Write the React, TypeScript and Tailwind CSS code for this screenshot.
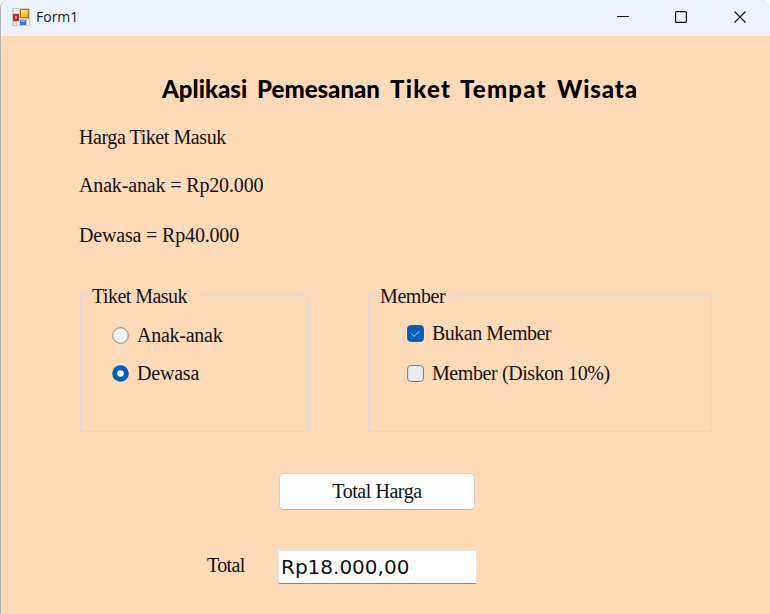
import type { ReactNode } from 'react';

const serif = "font-['Liberation_Serif',serif] text-[20px] leading-[24px] whitespace-nowrap text-[#111]";

function Label({ children, className = '' }: { children: ReactNode; className?: string }) {
  return <div className={`${serif} ${className}`}>{children}</div>;
}

function TitleBar() {
  return (
    <header className="flex h-9 items-center bg-[#eef2fa] pb-[2px] pl-[11px]">
      <svg width="18" height="18" viewBox="0 0 18 18">
        <defs>
          <linearGradient id="gold" x1="0" y1="0" x2="1" y2="1">
            <stop offset="0" stopColor="#ffe98a" />
            <stop offset="1" stopColor="#e5a800" />
          </linearGradient>
        </defs>
        <rect width="18" height="18" fill="#c9ccd0" />
        <rect x="2" y="1" width="5" height="4" fill="#f4f7fb" />
        <rect x="8" y="1" width="9" height="9" fill="#a97c12" />
        <rect x="9" y="2" width="7" height="7" fill="url(#gold)" />
        <rect x="1" y="6" width="6" height="7" fill="#b5302a" />
        <rect x="3" y="8" width="2" height="3" fill="#df8177" />
        <rect x="8" y="12" width="6" height="5" fill="#3f78d8" />
        <rect x="9" y="12" width="4" height="2" fill="#79a9f3" />
        <path d="M2 14h2v3H2zM5 14h2v3H5zM15 12h2v5h-2z" fill="#f4f7fb" />
      </svg>
      <span className="ml-[6px] font-['Open_Sans',sans-serif] text-[14px] leading-5 text-[#1b1b1b]">Form1</span>
      <svg className="ml-auto mr-[22px]" width="131" height="14" viewBox="0 0 131 14" fill="none" stroke="#111" strokeWidth="1.2">
        <path d="M0 6.5h12" strokeWidth="1" />
        <rect x="58.6" y="1.6" width="10.8" height="10.8" rx="1" />
        <path d="M117.5 1.5l11 11M128.5 1.5l-11 11" />
      </svg>
    </header>
  );
}

function Radio({ checked }: { checked?: boolean }) {
  return (
    <svg width="17" height="17" viewBox="0 0 17 17">
      {checked ? (
        <>
          <circle cx="8.5" cy="8.5" r="8.3" fill="#005fb8" />
          <circle cx="8.5" cy="8.5" r="3.3" fill="#fff" />
        </>
      ) : (
        <circle cx="8.5" cy="8.5" r="7.8" fill="#f3f3f3" stroke="#858585" />
      )}
    </svg>
  );
}

function Check({ checked }: { checked?: boolean }) {
  return (
    <svg width="17" height="17" viewBox="0 0 17 17">
      <rect x="0.6" y="0.6" width="15.8" height="15.8" rx="3" fill={checked ? '#005fb8' : '#ebebeb'} stroke={checked ? '#005fb8' : '#777'} />
      {checked && <path d="M4.5 8.8l2.6 2.6 5.4-5.3" fill="none" stroke="#c4dcf3" strokeWidth="1" />}
    </svg>
  );
}

function Group({ title, width, legend, children }: { title: string; width: string; legend: string; children: ReactNode }) {
  return (
    <section className={`h-[138px] border border-[#dfd9d9] ${width}`}>
      <div className={`-mt-[11px] ml-2 h-6 bg-[#ffdab9] pl-[3px] ${legend}`}>
        <Label>{title}</Label>
      </div>
      {children}
    </section>
  );
}

export default function App() {
  return (
    <div className="h-[614px] w-[770px] overflow-hidden rounded-t-lg border-l border-[#b0b0b3] bg-[#ffdab9]">
      <TitleBar />
      <main className="pl-[78px]">
        <h1 className="ml-[83px] flex h-[54px] pt-[37px] font-['Lato',sans-serif] text-[24px] leading-[32px] font-black whitespace-nowrap text-black">
          <span className="w-[95px]">Aplikasi</span>
          <span className="w-[133px]">Pemesanan</span>
          <span className="w-[70px] tracking-[1.3px]">Tiket</span>
          <span className="w-[97px] tracking-[1.2px]">Tempat</span>
          <span className="tracking-[0.9px]">Wisata</span>
        </h1>
        <Label className="mt-[35px] tracking-[-0.43px]">Harga Tiket Masuk</Label>
        <Label className="mt-6 tracking-[-0.15px]">Anak-anak = Rp20.000</Label>
        <Label className="mt-[26px] tracking-[-0.17px]">Dewasa = Rp40.000</Label>
        <div className="mt-[47px] ml-px flex gap-[59px]">
          <Group title="Tiket Masuk" width="w-[229px]" legend="w-[112px] tracking-[-0.55px]">
            <div className="mt-[15px] ml-[31px] flex items-center gap-2"><Radio /><Label className="tracking-[-0.25px]">Anak-anak</Label></div>
            <div className="mt-[14px] ml-[31px] flex items-center gap-2"><Radio checked /><Label className="tracking-[-0.2px]">Dewasa</Label></div>
          </Group>
          <Group title="Member" width="w-[344px]" legend="w-[74px] tracking-[-0.4px]">
            <div className="mt-[13px] ml-[38px] flex items-center gap-2"><Check checked /><Label className="tracking-[-0.5px]">Bukan Member</Label></div>
            <div className="mt-4 ml-[38px] flex items-center gap-2"><Check /><Label className="tracking-[-0.41px]">Member (Diskon 10%)</Label></div>
          </Group>
        </div>
        <button className="mt-[41px] ml-[200px] flex h-[37px] w-[196px] items-center justify-center rounded-[5px] border border-[#d5d1ce] border-b-[#bbb5b0] bg-[#fdfdfd] pb-[2px]">
          <Label className="tracking-[-0.45px]">Total Harga</Label>
        </button>
        <div className="mt-10 ml-[128px] flex">
          <Label className="mt-[3px] w-[70px] tracking-[-0.6px]">Total</Label>
          <div className="ml-px flex h-[34px] w-[199px] items-center rounded-[2px] border border-[#ebe4df] border-b-[#85827f] bg-white pb-px pl-[2px] font-['DejaVu_Sans',sans-serif] text-[20px] leading-6 text-[#111]">Rp18.000,00</div>
        </div>
      </main>
    </div>
  );
}
